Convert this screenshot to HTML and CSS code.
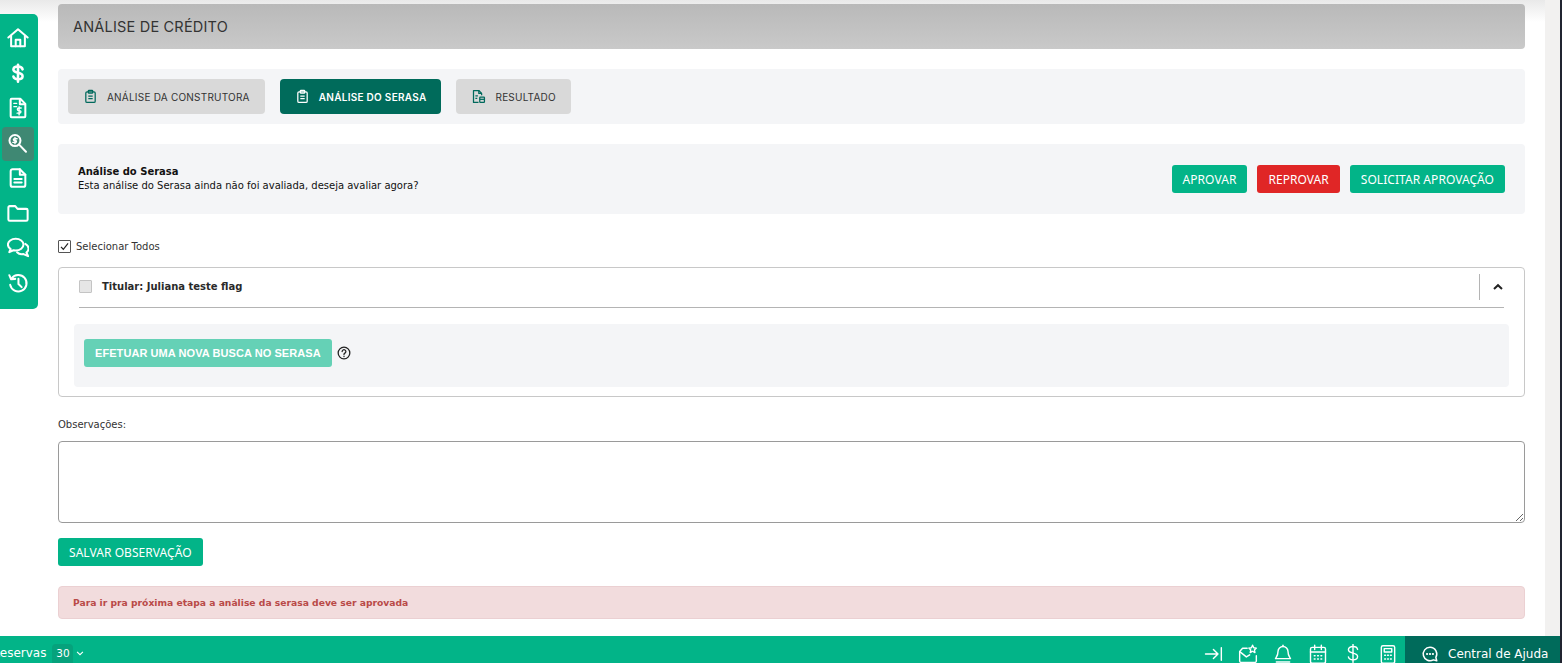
FILE: index.html
```html
<!DOCTYPE html>
<html lang="pt-BR">
<head>
    <meta charset="UTF-8">
    <meta name="viewport" content="width=device-width, initial-scale=1.0">
    <title>Análise de Crédito</title>
    <link rel="stylesheet" href="styles.css">
</head>
<body>
    <div class="app">
        <nav class="rail">
            <a class="rail-item"><svg viewBox="0 0 24 24"><path d="M1.500 11.500 12 2.500l10.500 9"/><path d="M4.500 9.500v11.500h15V9.500"/><path d="M9.500 21v-7h5v7"/></svg></a>
            <a class="rail-item"><svg class="bold" viewBox="0 0 24 24"><path d="M17 8c-.5-2-2.500-3-5-3-3 0-5 1.300-5 3.300 0 2.200 2.200 2.900 5 3.500s5 1.400 5 3.700c0 2-2 3.300-5 3.300-2.500 0-4.500-1-5-3"/><path d="M12 3v18.500"/></svg></a>
            <a class="rail-item"><svg viewBox="0 0 24 24"><path d="M14.500 2H5a1 1 0 0 0-1 1v18a1 1 0 0 0 1 1h14a1 1 0 0 0 1-1V7.500z"/><path d="M14 2.500v5.500h5.500"/><path class="thin" d="M7.500 7h3M7.500 10.500h3"/><path class="thin" d="M15.500 12h-2.800a1.300 1.300 0 0 0 0 2.800h1.100a1.300 1.300 0 0 1 0 2.800H11M13.200 10.500v9"/></svg></a>
            <a class="rail-item rail-item-active"><svg viewBox="0 0 24 24"><circle cx="8.700" cy="9.300" r="6"/><path d="m13.500 14 7.200 7.500"/><path class="thin" d="M11 7.300H8a1 1 0 0 0 0 2h1.300a1 1 0 0 1 0 2H6.300M8.700 5.800v7"/></svg></a>
            <a class="rail-item"><svg viewBox="0 0 24 24"><path d="M14 2.500H6a2 2 0 0 0-2 2v15a2 2 0 0 0 2 2h12a2 2 0 0 0 2-2V8.500z"/><path d="M14 2.500v6h6"/><path d="M8 13h8M8 17h8"/></svg></a>
            <a class="rail-item"><svg viewBox="0 0 24 24"><path d="M1.500 6a1.500 1.500 0 0 1 1.500-1.500h6l2.500 3h9.500a1.500 1.500 0 0 1 1.500 1.500v10a1.500 1.500 0 0 1-1.500 1.500H3a1.500 1.500 0 0 1-1.500-1.500z"/></svg></a>
            <a class="rail-item"><svg viewBox="0 0 24 24"><path d="M9.500 2C4.800 2 1 4.800 1 8.300c0 2 1.200 3.700 3 4.800L2.500 16.500l4.500-2c.8.200 1.600.2 2.500.2 4.700 0 8.500-2.900 8.500-6.400S14.200 2 9.500 2z"/><path d="M20 7.500c2 1.100 3.500 3 3.500 5.200 0 1.700-.9 3.100-2.300 4.200l1.800 4-5-2.300c-2.800.5-5.500-.3-7-2"/></svg></a>
            <a class="rail-item"><svg viewBox="0 0 24 24"><path d="M5 7a9 9 0 1 1-1.500 7"/><path d="M2.500 3.500 4.500 8l4.500-.5"/><path d="M12.500 7.500V13l3.500 3.500"/></svg></a>
        </nav>

        <main class="content">
            <h1 class="page-title">ANÁLISE DE CRÉDITO</h1>

            <div class="panel tabs">
                <button class="tab">
                    <svg class="tab-icon" viewBox="0 0 24 24"><rect x="4.500" y="4.500" width="15" height="17" rx="2"/><rect x="8.500" y="2" width="7" height="4.500" rx="1"/><path d="M8.500 11.500h7M8.500 15.500h7"/></svg>
                    ANÁLISE DA CONSTRUTORA
                </button>
                <button class="tab tab-active">
                    <svg class="tab-icon" viewBox="0 0 24 24"><rect x="4.500" y="4.500" width="15" height="17" rx="2"/><rect x="8.500" y="2" width="7" height="4.500" rx="1"/><path d="M8.500 11.500h7M8.500 15.500h7"/></svg>
                    ANÁLISE DO SERASA
                </button>
                <button class="tab">
                    <svg class="tab-icon" viewBox="0 0 24 24"><path d="M12 21.500H4V2.500h8.500L17 7v3"/><path d="M12.500 2.500V7H17"/><path d="M7 11h4M7 15h3"/><rect x="14" y="13" width="7.500" height="8.500" rx="1"/><path d="M14 16.500h7.500"/></svg>
                    RESULTADO
                </button>
            </div>

            <div class="panel review">
                <div class="review-text">
                    <strong>Análise do Serasa</strong>
                    <span>Esta análise do Serasa ainda não foi avaliada, deseja avaliar agora?</span>
                </div>
                <div class="review-actions">
                    <button class="btn">APROVAR</button>
                    <button class="btn btn-red">REPROVAR</button>
                    <button class="btn">SOLICITAR APROVAÇÃO</button>
                </div>
            </div>

            <label class="select-all">
                <span class="check check-on"><svg viewBox="0 0 14 14"><path d="m2.500 7.500 3 3L11.500 3"/></svg></span>
                Selecionar Todos
            </label>

            <section class="card">
                <div class="card-head">
                    <span class="check check-off"></span>
                    <span class="card-name">Titular: Juliana teste flag</span>
                    <span class="card-toggle"><svg viewBox="0 0 12 8"><path d="M2 6l4-3.800L10 6"/></svg></span>
                </div>
                <div class="card-body">
                    <button class="btn btn-faded">EFETUAR UMA NOVA BUSCA NO SERASA</button>
                    <svg class="help" viewBox="0 0 24 24"><circle cx="12" cy="12" r="10"/><path d="M8.800 9.500a3.200 3.200 0 1 1 4.800 2.800c-1 .6-1.600 1.200-1.600 2.200"/><path d="M12 17.500v.5"/></svg>
                </div>
            </section>

            <label class="obs-label" for="obs">Observações:</label>
            <textarea class="obs" id="obs"></textarea>
            <button class="btn btn-save">SALVAR OBSERVAÇÃO</button>

            <div class="alert">Para ir pra próxima etapa a análise da serasa deve ser aprovada</div>
        </main>

        <div class="scroll-track"></div>
    </div>

    <footer class="bar">
        <div class="bar-left">
            <span class="bar-title">Reservas</span>
            <span class="bar-count">30</span>
            <svg class="bar-caret" viewBox="0 0 12 8"><path d="M2.500 2 6 5.500 9.500 2"/></svg>
        </div>
        <div class="bar-icons">
            <svg viewBox="0 0 24 24"><path d="M3 12h15M12.500 6.500 18 12l-5.500 5.500"/><path d="M22 4.500v15"/></svg>
            <svg viewBox="0 0 24 24"><path d="M11 5H5.500L2 9v11.500a1.500 1.500 0 0 0 1.500 1.500h17a1.500 1.500 0 0 0 1.500-1.500V14"/><path d="m2.500 9.500 7.500 6 4-2.500"/><path d="m17.500 1.500 1.400 3 3.100.4-2.300 2.200.6 3.200-2.800-1.600-2.800 1.600.6-3.200L13 4.900l3.100-.4z"/></svg>
            <svg viewBox="0 0 24 24"><path d="M12 3a6 6 0 0 0-6 6c0 5-1.500 6-3 8.500h18c-1.500-2.500-3-3.500-3-8.500a6 6 0 0 0-6-6z"/><path d="M12 1.500V3"/><path d="M4 21.500h16"/></svg>
            <svg viewBox="0 0 24 24"><rect x="3" y="4" width="18" height="19" rx="2"/><path d="M3 9.500h18M8 1.500v5M16 1.500v5"/><path d="M7.500 14h1M11.500 14h1M15.500 14h1M7.500 18h1M11.500 18h1M15.500 18h1"/></svg>
            <svg viewBox="0 0 24 24"><path d="M17.500 6.500C17 4 14.800 3 12 3 9 3 6.500 4.500 6.500 7c0 2.500 2.500 3.300 5.500 4s5.500 1.500 5.500 4c0 2.500-2.500 4-5.500 4-2.800 0-5-1-5.500-3.500"/><path d="M12 0v22"/></svg>
            <svg viewBox="0 0 24 24"><rect x="4" y="2" width="16" height="21" rx="2"/><rect x="7.500" y="5.500" width="9" height="4"/><path d="M8 13.500h1M11.500 13.500h1M15 13.500h1M8 18h1M11.500 18h1M15 18h1"/></svg>
        </div>
        <a class="help-link">
            <svg viewBox="0 0 24 24"><path d="M12 3a9 9 0 1 0 4.500 16.800L21 21l-1.200-4.500A9 9 0 0 0 12 3z"/><path class="dots" d="M8 12h.2M11.900 12h.2M15.800 12h.2"/></svg>
            Central de Ajuda
        </a>
    </footer>
</body>
</html>
```

FILE: styles.css
```css
* {
    box-sizing: border-box;
}

html, body {
    height: 100%;
    margin: 0;
    overflow: hidden;
}

body {
    font-family: "DejaVu Sans", Verdana, sans-serif;
    font-size: 10px;
    color: #222;
    background: #fff;
    display: flex;
    flex-direction: column;
}

.app {
    flex: 1;
    min-height: 0;
    display: flex;
    background: linear-gradient(#e9e9e9, #fff 22px);
}

/* left rail */
.rail {
    width: 38px;
    height: 295px;
    margin-top: 14px;
    padding-top: 6px;
    flex-shrink: 0;
    background: #02b488;
    border-radius: 0 5px 5px 0;
    display: flex;
    flex-direction: column;
    align-items: center;
}

.rail-item {
    width: 32px;
    height: 35px;
    margin-left: -2px;
    border-radius: 4px;
    display: flex;
    align-items: center;
    justify-content: center;
}

.rail-item svg {
    width: 22px;
    height: 22px;
    fill: none;
    stroke: #fff;
    stroke-width: 2.200;
    stroke-linecap: round;
    stroke-linejoin: round;
}

.rail-item svg.bold {
    stroke-width: 2.800;
}

.rail-item svg .thin {
    stroke-width: 1.500;
}

.rail-item-active {
    height: 34px;
    margin-top: 2px;
    margin-bottom: -1px;
    padding-bottom: 2px;
    background: #3f8873;
}

/* main column */
.content {
    width: 1467px;
    margin-left: 20px;
    padding-top: 4px;
    flex-shrink: 0;
}

.page-title {
    height: 45px;
    margin: 0;
    padding-left: 15px;
    display: flex;
    align-items: center;
    font-family: Inter, "Noto Sans", sans-serif;
    font-size: 14.500px;
    font-weight: 400;
    letter-spacing: 0.2px;
    color: #333;
    background: linear-gradient(#b9b9b9, #c9c9c9);
    border-radius: 4px;
}

.panel {
    background: #f4f5f7;
    border-radius: 4px;
}

.tabs {
    margin-top: 20px;
    padding: 10px;
    display: flex;
    gap: 15px;
}

.tab {
    height: 35px;
    padding: 0 15px;
    display: flex;
    align-items: center;
    gap: 9px;
    font-family: Inter, "Liberation Sans", sans-serif;
    font-size: 10px;
    letter-spacing: 0.22px;
    color: #333;
    background: #d9d9d9;
    border: 0;
    border-radius: 4px;
}

.tab-icon {
    width: 15px;
    height: 15px;
    fill: none;
    stroke: #00695c;
    stroke-width: 2;
    stroke-linejoin: round;
}

.tab-active {
    color: #fff;
    font-weight: 600;
    letter-spacing: 0.28px;
    background: #006b5b;
}

.tab-active .tab-icon {
    stroke: #fff;
}

.review {
    height: 70px;
    margin-top: 20px;
    padding: 0 20px;
    display: flex;
    align-items: center;
    justify-content: space-between;
}

.review-text {
    display: flex;
    flex-direction: column;
    line-height: 14px;
    color: #111;
}

.review-actions {
    display: flex;
    gap: 10px;
}

.btn {
    height: 28px;
    padding: 0 11px;
    font-family: "Noto Sans", "DejaVu Sans", sans-serif;
    font-size: 12px;
    letter-spacing: 0.05px;
    color: #fff;
    background: #02b488;
    border: 0;
    border-radius: 3px;
}

.btn-red {
    background: #e02626;
}

.select-all {
    margin-top: 25px;
    height: 14px;
    display: flex;
    align-items: center;
    gap: 5px;
    color: #333;
}

.check {
    width: 13px;
    height: 13px;
    flex-shrink: 0;
    border-radius: 1px;
}

.check svg {
    display: block;
    width: 11px;
    height: 11px;
    fill: none;
    stroke: #222;
    stroke-width: 1.500;
}

.check-on {
    background: #fff;
    border: 1px solid #555;
}

.check-off {
    background: #e6e6e6;
    border: 1px solid #c4c4c4;
}

.card {
    height: 130px;
    margin-top: 14px;
    padding: 0 15px;
    border: 1px solid #c8c8c8;
    border-radius: 4px;
}

.card-head {
    height: 40px;
    margin: 0 5px;
    padding-bottom: 2px;
    display: flex;
    align-items: center;
    border-bottom: 1px solid #b4b4b4;
}

.card-name {
    margin-left: 10px;
    font-weight: 700;
    color: #2a2a2a;
}

.card-toggle {
    height: 26px;
    width: 25px;
    margin-left: auto;
    display: flex;
    align-items: center;
    justify-content: flex-end;
    border-left: 1px solid #b4b4b4;
}

.card-toggle svg {
    width: 12px;
    height: 8px;
    fill: none;
    stroke: #222;
    stroke-width: 2;
}

.card-body {
    height: 63px;
    margin-top: 16px;
    padding: 0 10px 5px;
    display: flex;
    align-items: center;
    gap: 5px;
    background: #f4f5f7;
    border-radius: 4px;
}

.btn-faded {
    font-family: "Liberation Sans", sans-serif;
    font-size: 11px;
    font-weight: 700;
    letter-spacing: 0.07px;
    background: #65d1b6;
}

.help {
    width: 14px;
    height: 14px;
    fill: none;
    stroke: #222;
    stroke-width: 2.200;
    stroke-linecap: round;
}

.obs-label {
    display: block;
    margin-top: 22px;
    line-height: 12px;
    color: #333;
}

.obs {
    display: block;
    width: 100%;
    height: 82px;
    margin-top: 10px;
    border: 1px solid #9a9a9a;
    border-radius: 4px;
    background: #fff;
}

.btn-save {
    display: block;
    margin-top: 15px;
}

.alert {
    height: 33px;
    margin-top: 20px;
    padding-left: 14px;
    display: flex;
    align-items: center;
    font-size: 9.200px;
    font-weight: 700;
    color: #b94a48;
    background: #f2dcdd;
    border: 1px solid #ebd0d2;
    border-radius: 4px;
}

.scroll-track {
    width: 17px;
    margin-left: 20px;
    flex-shrink: 0;
    background: #f2f1f0;
    border-right: 2px solid #202430;
}

/* bottom bar, its content sits low and gets clipped by the window */
.bar {
    height: 27px;
    flex-shrink: 0;
    display: flex;
    overflow: hidden;
    color: #fff;
    background: #02b488;
    border-right: 2px solid #202430;
}

.bar-left {
    margin-left: -8px;
    padding-top: 8px;
    display: flex;
    align-items: flex-start;
}

.bar-title {
    font-size: 12px;
    line-height: 19px;
}

.bar-count {
    height: 19px;
    width: 21px;
    margin-left: 6px;
    text-align: center;
    font-size: 10.500px;
    line-height: 19px;
    background: #06a27c;
    border-radius: 4px 4px 0 0;
}

.bar-caret {
    width: 10px;
    height: 7px;
    margin: 6px 0 0 2px;
    fill: none;
    stroke: #fff;
    stroke-width: 1.300;
}

.bar-icons {
    margin-left: auto;
    padding: 8px 7px 0 0;
    display: flex;
    align-items: flex-start;
    gap: 15px;
}

.bar-icons svg {
    width: 20px;
    height: 20px;
    fill: none;
    stroke: #fff;
    stroke-width: 1.700;
    stroke-linecap: round;
    stroke-linejoin: round;
    flex-shrink: 0;
}

.help-link {
    width: 155px;
    padding: 8px 0 0 16px;
    display: flex;
    align-items: center;
    gap: 9px;
    font-size: 12px;
    background: #006b5b;
}

.help-link svg {
    width: 18px;
    height: 18px;
    fill: none;
    stroke: #fff;
    stroke-width: 2;
    stroke-linecap: round;
    stroke-linejoin: round;
}

.help-link svg .dots {
    stroke-width: 2.800;
}
```
